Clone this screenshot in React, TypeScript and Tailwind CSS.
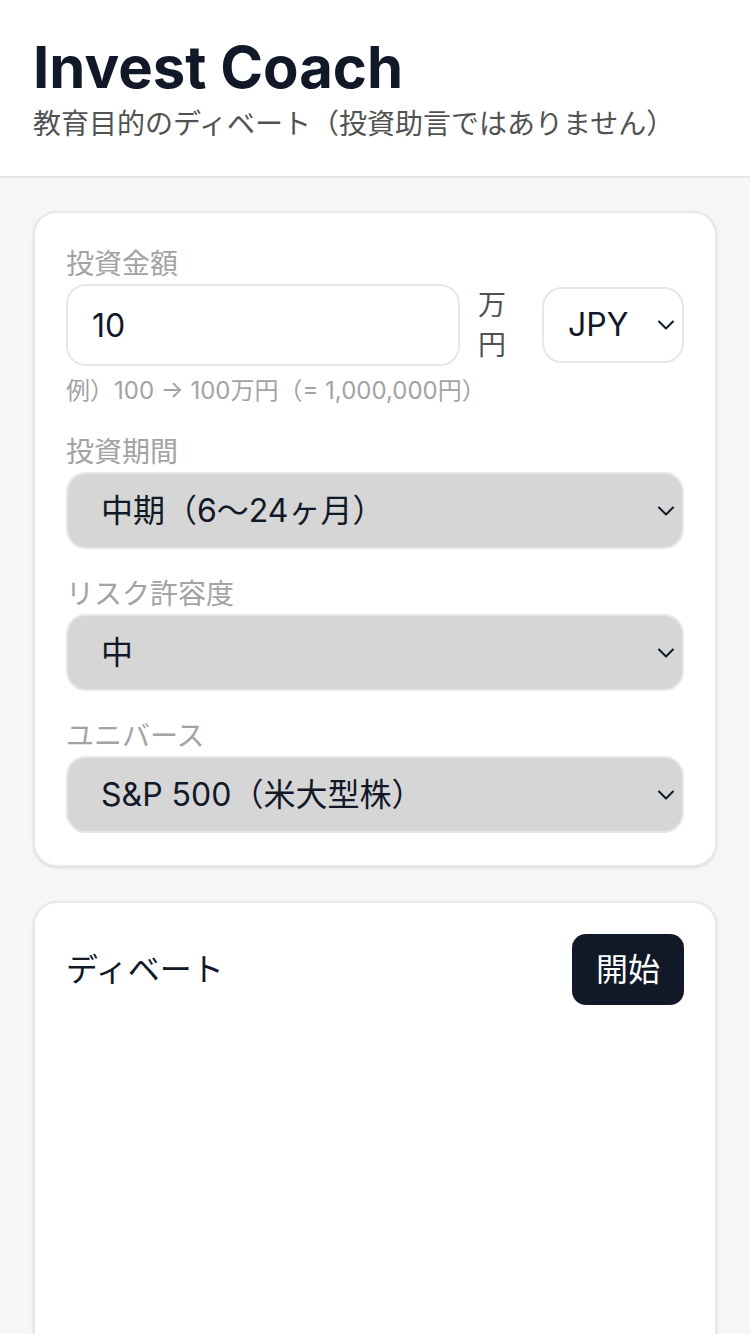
import React from "react";

const FONT = "font-['Inter','Noto_Sans_CJK_JP',sans-serif]";

function Chevron() {
    return (
        <svg
            className="pointer-events-none absolute right-[9px] top-1/2 -translate-y-1/2"
            width="18"
            height="11"
            viewBox="0 0 18 11"
            fill="none"
        >
            <path d="M2 2l7 7 7-7" stroke="#111827" strokeWidth="2" strokeLinecap="round" strokeLinejoin="round" />
        </svg>
    );
}

function Field({ label, value, options }: { label: string; value: string; options: string[] }) {
    return (
        <div className="flex flex-col">
            <label className="text-[28px] leading-[40px] text-[#a3a3a3]">{label}</label>
            <div className="relative">
                <select
                    defaultValue={value}
                    className="h-[77px] w-full appearance-none rounded-[20px] border-2 border-[#e5e7eb] bg-[#d6d6d6] pl-[33px] pr-[40px] text-[32px] text-[#111827] outline-none"
                >
                    {options.map((o) => (
                        <option key={o}>{o}</option>
                    ))}
                </select>
                <Chevron />
            </div>
        </div>
    );
}

export default function App() {
    return (
        <div className={`${FONT} min-h-screen bg-[#f6f6f5]`}>
            <header className="border-b-2 border-[#e5e7eb] bg-white px-[33px] pt-[37px] pb-[32px]">
                <h1 className="text-[58px] font-bold leading-[60px] text-[#111827]">Invest Coach</h1>
                <p className="mt-[7px] text-[28px] leading-[40px] text-[#525252]">
                    教育目的のディベート（投資助言ではありません）
                </p>
            </header>

            <main className="flex flex-col gap-[34px] px-[33px] pt-[33px]">
                <section className="flex flex-col gap-[25px] rounded-[24px] border-2 border-[#e8e8ec] bg-white px-[31px] pt-[31px] pb-[32px] shadow-sm">
                    <div className="flex flex-col">
                        <label className="text-[28px] leading-[40px] text-[#a3a3a3]">投資金額</label>
                        <div className="flex items-center">
                            <input
                                defaultValue="10"
                                className="h-[82px] min-w-0 flex-1 rounded-[20px] border-2 border-[#e5e7eb] bg-white pl-[24px] text-[32px] text-[#111827] outline-none"
                            />
                            <span className="ml-[18px] w-[28px] text-[28px] leading-[40px] text-[#525252]">万円</span>
                            <div className="relative ml-[36px] w-[142px]">
                                <select
                                    defaultValue="JPY"
                                    className="h-[76px] w-full appearance-none rounded-[20px] border-2 border-[#e5e7eb] bg-white pl-[24px] text-[32px] text-[#111827] outline-none"
                                >
                                    <option>JPY</option>
                                    <option>USD</option>
                                </select>
                                <Chevron />
                            </div>
                        </div>
                        <p className="mt-[9px] text-[24px] leading-[32px] text-[#a3a3a3]">
                            例）100 → 100万円（= 1,000,000円）
                        </p>
                    </div>

                    <Field
                        label="投資期間"
                        value="中期（6〜24ヶ月）"
                        options={["短期（〜6ヶ月）", "中期（6〜24ヶ月）", "長期（24ヶ月〜）"]}
                    />
                    <Field label="リスク許容度" value="中" options={["低", "中", "高"]} />
                    <Field
                        label="ユニバース"
                        value="S&P 500（米大型株）"
                        options={["S&P 500（米大型株）", "日経225", "全世界株"]}
                    />
                </section>

                <section className="min-h-[600px] rounded-[24px] border-2 border-[#e8e8ec] bg-white px-[31px] pt-[31px] shadow-sm">
                    <div className="flex items-center justify-between">
                        <h2 className="text-[32px] leading-[44px] text-[#111827]">ディベート</h2>
                        <button className="h-[71px] rounded-[14px] bg-[#111827] px-[24px] text-[32px] text-white">
                            開始
                        </button>
                    </div>
                </section>
            </main>
        </div>
    );
}
